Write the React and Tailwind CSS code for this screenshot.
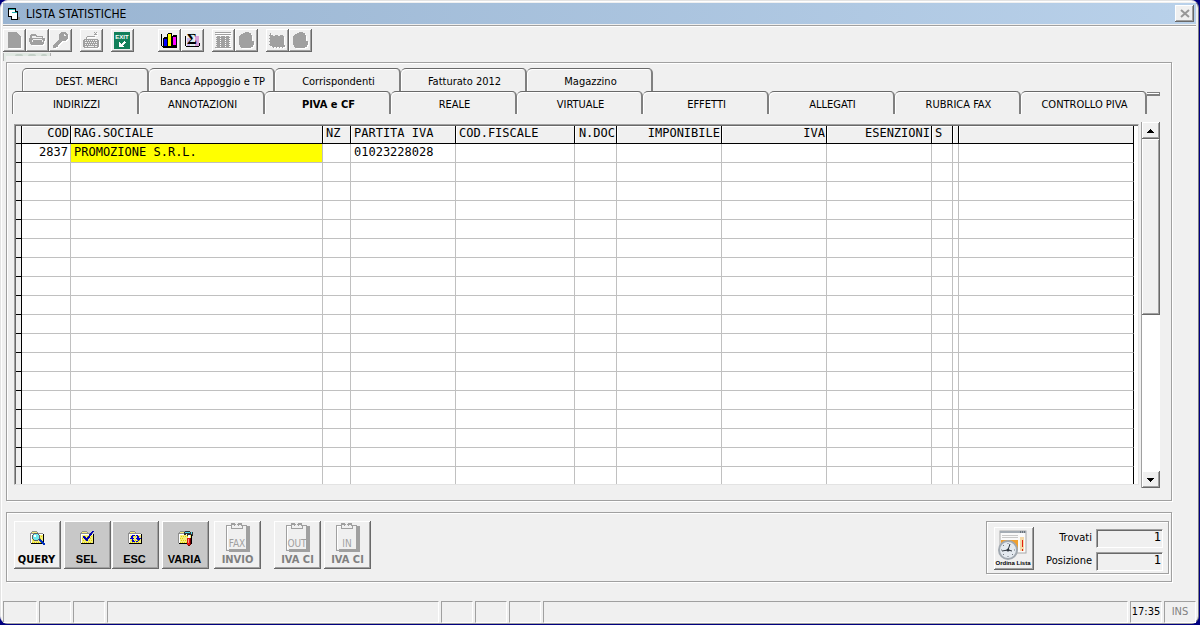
import { useState } from 'react';

const UPPER_TABS = ['DEST. MERCI', 'Banca Appoggio e TP', 'Corrispondenti', 'Fatturato 2012', 'Magazzino'];
const LOWER_TABS = [
  'INDIRIZZI', 'ANNOTAZIONI', 'PIVA e CF', 'REALE', 'VIRTUALE',
  'EFFETTI', 'ALLEGATI', 'RUBRICA FAX', 'CONTROLLO PIVA',
];

const COLUMNS = [
  { key: 'cod', label: 'COD', width: 'w-[49px]', right: true },
  { key: 'ragione', label: 'RAG.SOCIALE', width: 'w-[252px]' },
  { key: 'nz', label: 'NZ', width: 'w-[28px]' },
  { key: 'piva', label: 'PARTITA IVA', width: 'w-[105px]' },
  { key: 'cf', label: 'COD.FISCALE', width: 'w-[119px]' },
  { key: 'ndoc', label: 'N.DOC', width: 'w-[42px]', right: true },
  { key: 'imponibile', label: 'IMPONIBILE', width: 'w-[105px]', right: true },
  { key: 'iva', label: 'IVA', width: 'w-[105px]', right: true },
  { key: 'esenzioni', label: 'ESENZIONI', width: 'w-[105px]', right: true },
  { key: 's', label: 'S', width: 'w-[21px]' },
  { key: 'sep', label: '', width: 'w-[6px]' },
  { key: 'note', label: '', width: '' },
];

const ROWS = [{ cod: '2837', ragione: 'PROMOZIONE S.R.L.', piva: '01023228028' }];
const EMPTY_ROWS = 17;

const RAISED = 'shadow-[inset_-1px_-1px_#696969,inset_1px_1px_#ffffff,inset_-2px_-2px_#a0a0a0]';
const ETCHED = 'border border-[#a0a0a0] shadow-[inset_1px_1px_#ffffff,1px_1px_#ffffff]';

/* ---------- Toolbar icons ---------- */

function Glyph({ children, size = 18, disabled = false }) {
  return (
    <svg
      width={size}
      height={size}
      viewBox={`0 0 ${size} ${size}`}
      shapeRendering="crispEdges"
      aria-hidden="true"
      className={disabled ? 'drop-shadow-[1px_1px_0_#ffffff]' : ''}
    >
      {children}
    </svg>
  );
}

const PageIcon = () => (
  <Glyph disabled><path d="M3 1h9v1h1v1h1v1h1v1h1v12H3z" fill="#a0a0a0" /></Glyph>
);

const FolderIcon = () => (
  <Glyph disabled>
    <path d="M2 4h1V3h5v1h1v1h6v2h2v3h-1v3h-1v1H3v-1H2v-2H1V7h1z" fill="#a0a0a0" />
    <path d="M4 5h4v1h6v1H4zM5 8h9v1H5zM4 9h1v2H4zM14 9h1v2h-1z" fill="#f0f0f0" />
  </Glyph>
);

const KeyIcon = () => (
  <Glyph disabled>
    <path d="M10 1h5v1h1v1h1v5h-1v1h-1v1h-4v1h-1v1H9v1H8v1H7v2H5v1H2v-3h1v-1h1v-1h1v-1h1v-1h1V9h1V3h1V2h1z" fill="#a0a0a0" />
    <path d="M13 3h1v1h1v1h-2z" fill="#f0f0f0" />
  </Glyph>
);

const KeyboardIcon = () => (
  <Glyph disabled>
    <path d="M12 1h1v1h-1zM14 1h1v1h-1zM13 2h1v2h-1zM12 3h3v1h-3zM5 5h8v1H5zM4 6h1v2H4z" fill="#a0a0a0" />
    <path d="M2 8h14v1h1v7h-1v1H2v-1H1V9h1z" fill="#a0a0a0" />
    <path
      d="M3 9h1v1H3zM5 9h1v1H5zM7 9h1v1H7zM9 9h1v1H9zM11 9h1v1h-1zM13 9h2v1h-2zM3 11h2v1H3zM6 11h1v1H6zM8 11h1v1H8zM10 11h1v1h-1zM12 11h1v1h-1zM14 11h1v1h-1zM3 13h1v1H3zM5 13h1v1H5zM7 13h1v1H7zM9 13h1v1H9zM11 13h1v1h-1zM13 13h2v1h-2zM3 15h2v1H3zM6 15h6v1H6zM13 15h2v1h-2z"
      fill="#f0f0f0"
    />
  </Glyph>
);

const ExitIcon = () => (
  <Glyph>
    <rect x="1" y="1" width="16" height="17" fill="#12805a" />
    <text x="9" y="8" fontSize="6" fontWeight="700" fill="#ffffff" textAnchor="middle" fontFamily="Liberation Sans, sans-serif">EXIT</text>
    <path d="M11 10h1v1h1v1h-1v1h-1v1h-1v1h1v1H6v-5h1v1h1v1h1v-1h1v-1h1z" fill="#ffffff" />
  </Glyph>
);

const ChartIcon = () => (
  <Glyph>
    <path d="M1 3h1v12H1zM2 15h15v1H2zM3 16h14v1H3z" fill="#000000" />
    <path d="M3 7h1V6h4v9H3zM7 3h1V2h4v13H7zM12 5h1V4h4v10h-1v1h-4z" fill="#000000" />
    <path d="M4 8h3v7H4z" fill="#0000ff" />
    <path d="M8 3h3v12H8z" fill="#ffff00" />
    <path d="M13 6h3v8h-3z" fill="#ff00ff" />
    <path d="M16 13h1v2h-1z" fill="#000000" />
  </Glyph>
);

const SumIcon = () => (
  <Glyph>
    <path d="M2 5h1v10H2zM3 15h13v1H3z" fill="#000000" />
    <path d="M4 7h3v8H4z" fill="#c8b8f0" />
    <path d="M8 2h3v13H8z" fill="#d8ecf0" />
    <path d="M12 5h4v10h-4z" fill="#d8a0d8" />
    <path d="M16 12h1v3h-1z" fill="#000000" />
    <text x="9" y="13" fontSize="15" fontWeight="700" fill="#000000" textAnchor="middle" fontFamily="Liberation Serif, serif">Σ</text>
  </Glyph>
);

const GridIcon = () => (
  <Glyph disabled>
    <path d="M1 1h16v1H1zM1 3h16v1H1zM3 5h3v12H3zM7 5h4v12H7zM12 5h3v12h-3z" fill="#a0a0a0" />
    <path d="M2 6h14v1H2zM2 8h14v1H2zM2 10h14v1H2zM2 12h14v1H2zM2 14h14v1H2zM1 16h16v1H1z" fill="#a0a0a0" />
  </Glyph>
);

const HandIcon = () => (
  <Glyph disabled><path d="M4 3h2V2h2V1h4v1h2v2h1v6h2v4h-1v2h-2v1H4v-1H3v-2H2V5h1V4h1z" fill="#a0a0a0" /></Glyph>
);

const SeriesIcon = () => (
  <Glyph disabled>
    <path d="M2 2h1v2h2v1h2V4h3v1h2V4h3v1h1v9h1v2H4v-1H2z" fill="#a0a0a0" />
    <path d="M1 4h1v1H1zM1 7h1v1H1zM1 10h1v1H1zM1 13h1v1H1zM5 16h1v1H5zM8 16h1v1H8zM11 16h1v1h-1zM14 16h1v1h-1z" fill="#a0a0a0" />
  </Glyph>
);

const TOOLBAR = [
  [['Nuovo', PageIcon], ['Apri', FolderIcon], ['Chiave', KeyIcon]],
  [['Tastiera', KeyboardIcon]],
  [['Uscita', ExitIcon]],
  [['Grafico', ChartIcon], ['Totali', SumIcon]],
  [['Griglia', GridIcon], ['Copia', HandIcon]],
  [['Serie', SeriesIcon], ['Incolla', HandIcon]],
];
const GROUP_GAP = ['', 'ml-[8px]', 'ml-[8px]', 'ml-[24px]', 'ml-[8px]', 'ml-[8px]'];

/* ---------- Command icons ---------- */

function YellowFolder({ children }) {
  return (
    <Glyph size={16}>
      <path d="M1 3h1V2h1V1h5v1h1v1h5v11H2v-1H1z" fill="#909090" />
      <path d="M3 2h5v1H3zM2 4h12v9H2z" fill="#f4ec7c" />
      <path d="M2 4h12v1H2zM2 4h1v9H2z" fill="#ffffff" />
      <path d="M4 6h1v1H4zM6 6h1v1H6zM8 6h1v1H8zM10 6h1v1h-1zM12 6h1v1h-1zM3 8h1v1H3zM5 8h1v1H5zM11 8h1v1h-1zM4 10h1v1H4zM6 10h1v1H6zM8 10h1v1H8zM10 10h1v1h-1zM12 10h1v1h-1zM3 12h1v1H3zM5 12h1v1H5zM7 12h1v1H7zM9 12h1v1H9zM11 12h1v1h-1z" fill="#e0d800" />
      <path d="M14 4h1v10H2v-1h12z" fill="#000000" />
      {children}
    </Glyph>
  );
}

const QueryIcon = () => (
  <YellowFolder>
    <path d="M5 3h4v1h1v1h1v4h-1v1H9v1H5v-1H4V9H3V5h1V4h1z" fill="#606060" />
    <path d="M5 4h4v1h1v4H9v1H5V9H4V5h1z" fill="#70e8f0" />
    <path d="M5 5h2v2H5z" fill="#ffffff" />
    <path d="M10 9h2v1h1v1h1v1h1v1h1v2h-2v-1h-1v-1h-1v-1h-1v-1h-1z" fill="#0030c0" />
  </YellowFolder>
);

const CheckIcon = () => (
  <YellowFolder>
    <path d="M13 1h2v1h-1v1h-1v2h-1v1h-1v2h-1v1H9v2H7v-1H6V9H5V8H4V6h2v1h1v1h1V7h1V6h1V4h1V3h1V2h1z" fill="#0000b0" />
  </YellowFolder>
);

const CycleIcon = () => (
  <YellowFolder>
    <path d="M5 5h3v1H6v2h1v1H6v1H5V9H3V8h1V6h1zM5 10h2v1h1v1H5zM9 5h2v1h1v2h2v1h-1v1h-1v1h-1v-1h-1V9H9V8h1V6H9zM9 11h2v1H9z" fill="#0000d0" />
  </YellowFolder>
);

const HammerIcon = () => (
  <YellowFolder>
    <path d="M7 2h1V1h5v1h3v4h-1V5h-2v1h-3V4H9v1H7z" fill="#303030" />
    <path d="M8 2h5v1H8zM14 2h1v2h-1z" fill="#50d8e8" />
    <path d="M11 5h2v3h-2z" fill="#ffffff" />
    <path d="M10 8h3v7h-3z" fill="#e01010" />
    <path d="M11 9h1v4h-1z" fill="#ff9090" />
    <path d="M13 8h1v7h-1zM11 15h2v1h-2z" fill="#700000" />
  </YellowFolder>
);

function Clipboard({ text }) {
  return (
    <svg width="26" height="32" viewBox="0 0 26 32" shapeRendering="crispEdges" aria-hidden="true">
      <path d="M22 4h3v26H4v-3h18z" fill="#a0a0a0" />
      <path d="M1 3h6v1H2v24h19V4h-5V3h6v26H1z" fill="#a0a0a0" />
      <path d="M2 4h5v1H3v22H2z" fill="#ffffff" />
      <path d="M6 1h4v1h1v1h-1v1h-1V3H6zM13 1h4v2h-3v1h-1V3h-1V2h1zM6 4h1v2h10V4h1v3H6z" fill="#a0a0a0" />
      <text x="12" y="25" fontSize="10" fontWeight="400" fill="#a0a0a0" textAnchor="middle" fontFamily="DejaVu Sans Condensed, sans-serif">{text}</text>
    </svg>
  );
}

function SortIcon() {
  return (
    <svg width="30" height="30" viewBox="0 0 30 30" aria-hidden="true">
      <rect x="2" y="1" width="26" height="22" fill="#fafafa" stroke="#a8a8a8" />
      <rect x="2" y="1" width="26" height="2" fill="#a4acb4" />
      <path d="M22 2h1M24 2h1M26 2h1" stroke="#303840" />
      <rect x="4" y="5" width="16" height="1" fill="#c8c8c8" />
      <rect x="4" y="7" width="16" height="1" fill="#c8c8c8" />
      <rect x="3" y="10" width="17" height="10" fill="#f0a030" />
      <rect x="22" y="7" width="4" height="14" fill="#f6d9a8" />
      <path d="M24 10h1v7h-1zM24 19h1v2h-1z" fill="#e02010" />
      <circle cx="10" cy="20" r="9" fill="#e4eaf0" stroke="#a0a8b0" strokeWidth="2" />
      <path d="M10 13v1M10 26v1M3 20h1M16 20h1M5 15l1 1M15 25l-1-1M5 25l1-1" stroke="#707880" />
      <path d="M12 14l-2 6-6 1M10 20l4 1" fill="none" stroke="#303840" strokeWidth="1" />
      <circle cx="10" cy="20" r="1.5" fill="#303840" />
    </svg>
  );
}

/* ---------- Parts ---------- */

function TitleBar() {
  return (
    <header className="flex h-[21px] shrink-0 items-center bg-linear-to-r from-[#99b4d1] to-[#b9d1ea] pr-[2px] pl-[4px]">
      <svg width="14" height="14" viewBox="0 0 14 14" shapeRendering="crispEdges" aria-hidden="true">
        <path d="M1 1h8v3h2v9H4v-3H1z" fill="#000000" />
        <path d="M2 3h6v6H2zM5 6h5v6H5z" fill="#ffffff" />
        <path d="M2 2h6v1H2zM5 5h5v1H5z" fill="#20b0b0" />
        <path d="M11 10h2v3h-2z" fill="#909090" />
      </svg>
      <h1 className="ml-[5px] text-[12px] leading-[20px]">LISTA STATISTICHE</h1>
      <button type="button" aria-label="Chiudi" className={`ml-auto flex h-[17px] w-[19px] items-center justify-center bg-[#f0f0f0] ${RAISED}`}>
        <svg width="10" height="9" viewBox="0 0 10 9" aria-hidden="true">
          <path d="M1 1l8 7M9 1L1 8" stroke="#989898" strokeWidth="2" />
        </svg>
      </button>
    </header>
  );
}

function Toolbar() {
  return (
    <div className="mt-px flex shrink-0 border-t border-[#a0a0a0] pt-[3px] shadow-[inset_0_1px_#ffffff]">
      {TOOLBAR.map((group, i) => (
        <div key={i} className={`flex ${GROUP_GAP[i]}`}>
          {group.map(([name, Icon]) => (
            <button key={name} type="button" aria-label={name} className={`flex size-[23px] items-center justify-center pr-[2px] pb-[2px] ${RAISED}`}>
              <Icon />
            </button>
          ))}
        </div>
      ))}
    </div>
  );
}

function Tab({ label, active, onSelect }) {
  return (
    <button
      type="button"
      role="tab"
      aria-selected={active}
      onClick={() => onSelect(label)}
      className={`h-[23px] w-[126px] shrink-0 rounded-t-[5px] border-t border-r-2 border-[#808080] border-t-[#696969] pt-[3px] pl-[3px] text-[11px] leading-[19px] whitespace-nowrap shadow-[inset_1px_1px_#ffffff] first:w-[127px] first:border-l ${active ? 'font-bold' : ''}`}
    >
      {label}
    </button>
  );
}

function Grid() {
  const blank = Array.from({ length: EMPTY_ROWS }, () => ({}));
  return (
    <div className="mt-[2px] mb-[3px] min-h-0 min-w-0 flex-1 overflow-hidden border border-t-[#a0a0a0] border-r-[#e3e3e3] border-b-[#e3e3e3] border-l-[#a0a0a0] bg-white pr-[4px] pl-px shadow-[inset_1px_1px_#696969]">
      <table className="mt-px w-full table-fixed border-separate border-spacing-0 font-[DejaVu_Sans_Mono,monospace] text-[12px] leading-[16px]">
        <colgroup>
          <col className="w-[6px]" />
          {COLUMNS.map((c) => <col key={c.key} className={c.width} />)}
        </colgroup>
        <thead>
          <tr className="h-[18px] bg-[#f0f0f0]">
            <th className="border-r border-b border-black p-0" />
            {COLUMNS.map((c) => (
              <th
                key={c.key}
                scope="col"
                className={`h-[18px] overflow-hidden border-r border-b border-black p-0 pb-[2px] leading-[15px] font-normal whitespace-nowrap shadow-[inset_1px_1px_#ffffff] ${c.right ? 'pr-px text-right' : 'pl-[3px] text-left'}`}
              >
                {c.label}
              </th>
            ))}
          </tr>
        </thead>
        <tbody>
          {[...ROWS, ...blank].map((row, i) => (
            <tr key={i} className="h-[19px]">
              <td className="border-r border-b border-black bg-[#f0f0f0] p-0" />
              {COLUMNS.map((c) => (
                <td
                  key={c.key}
                  className={`h-[19px] border-r border-b border-[#c0c0c0] p-0 pb-[2px] whitespace-nowrap last:border-r-black ${c.right ? 'pr-[2px] text-right' : 'pl-[3px]'} ${c.key === 'ragione' && row.ragione ? 'bg-[#ffff00]' : ''}`}
                >
                  {row[c.key]}
                </td>
              ))}
            </tr>
          ))}
        </tbody>
      </table>
    </div>
  );
}

function ScrollBar() {
  return (
    <div className="ml-[2px] flex w-[19px] shrink-0 flex-col border-l border-[#a0a0a0] bg-white">
      <button type="button" aria-label="Su" className={`flex h-[17px] items-center justify-center bg-[#f0f0f0] pr-[2px] ${RAISED}`}>
        <svg width="7" height="4" viewBox="0 0 7 4" shapeRendering="crispEdges" aria-hidden="true"><path d="M3 0h1v1h1v1h1v1h1v1H0V3h1V2h1V1h1z" /></svg>
      </button>
      <div className={`h-[176px] bg-[#f0f0f0] ${RAISED}`} />
      <button type="button" aria-label="Giù" className={`mt-auto flex h-[17px] items-center justify-center bg-[#f0f0f0] pr-[2px] ${RAISED}`}>
        <svg width="7" height="4" viewBox="0 0 7 4" shapeRendering="crispEdges" aria-hidden="true"><path d="M0 0h7v1H6v1H5v1H4v1H3V3H2V2H1V1H0z" /></svg>
      </button>
    </div>
  );
}

function Command({ label, icon, tone = 'normal', className = '' }) {
  const tones = {
    normal: 'bg-[#f0f0f0] pt-[9px] pr-[2px] text-[11px]',
    dark: 'bg-[#c8c8c8] pt-[9px] pr-[2px] text-[11px] font-[Liberation_Sans,Arial,sans-serif]',
    disabled: 'bg-[#f0f0f0] pt-px text-[11px] text-[#808080]',
  };
  return (
    <button type="button" disabled={tone === 'disabled'} className={`flex h-[48px] w-[47px] shrink-0 flex-col items-center justify-between pb-[3px] leading-[13px] font-bold whitespace-nowrap ${RAISED} ${tones[tone]} ${className}`}>
      {icon}
      <span className={tone === 'disabled' ? '-mt-[3px]' : ''}>{label}</span>
    </button>
  );
}

function Counter({ id, label, value }) {
  return (
    <div className="flex items-center justify-end gap-[4px]">
      <label htmlFor={id} className="pb-[3px] text-[11px] leading-[15px]">{label}</label>
      <input
        id={id}
        readOnly
        value={value}
        className="h-[19px] w-[67px] border border-t-[#a0a0a0] border-r-white border-b-white border-l-[#a0a0a0] bg-[#f0f0f0] pr-px pb-[3px] text-right font-[DejaVu_Sans_Mono,monospace] text-[12px] shadow-[inset_1px_1px_#696969] outline-none"
      />
    </div>
  );
}

const STATUS_CELLS = ['w-[34px]', 'w-[32px]', 'w-[32px]', 'w-[332px]', 'w-[32px]', 'w-[32px]', 'w-[32px]', 'flex-1'];
const STATUS_BORDER = 'border border-t-[#a0a0a0] border-r-white border-b-white border-l-[#a0a0a0]';

function StatusBar() {
  return (
    <footer className="mt-[19px] flex h-[22px] shrink-0 gap-[2px] text-[11px] leading-[19px]">
      {STATUS_CELLS.map((w, i) => <div key={i} className={`${w} ${STATUS_BORDER}`} />)}
      <div className={`w-[32px] text-center ${STATUS_BORDER}`}>17:35</div>
      <div className={`w-[32px] text-center text-[#808080] ${STATUS_BORDER}`}>INS</div>
    </footer>
  );
}

export default function App() {
  const [tab, setTab] = useState('PIVA e CF');

  return (
    <div className="h-screen bg-[#000080] pr-px pb-px font-[DejaVu_Sans_Condensed,DejaVu_Sans,sans-serif] text-black">
      <div className="flex h-full flex-col rounded-[8px] border border-t-[#e3e3e3] border-r-[#808080] border-b-[#a0a0a0] border-l-[#e3e3e3] bg-[#f0f0f0] px-[2px] pt-[2px] shadow-[inset_1px_1px_#ffffff]">
        <TitleBar />
        <Toolbar />

        {/* Strip left under the toolbar */}
        <div className="flex h-[10px] shrink-0 pt-px">
          <div className="h-[8px] w-[3px] border-l border-[#b0b0b0] bg-[#e4ebe6]" />
          <div className="flex h-[3px] w-[45px] items-end gap-[5px] border-r border-[#b0b0b0] bg-[#e0e8e2] pl-[9px]">
            <span className="h-[2px] w-[8px] rounded-t-full bg-[#c4d0c8]" />
            <span className="h-[2px] w-[8px] rounded-t-full bg-[#c4d0c8]" />
            <span className="h-[2px] w-[6px] rounded-t-full bg-[#c4d0c8]" />
          </div>
        </div>

        <main className="flex min-h-0 flex-1 flex-col gap-[11px] pr-[24px] pl-[3px]">
          <section className={`flex min-h-0 flex-1 flex-col pt-[5px] pb-[12px] ${ETCHED}`}>
            <div role="tablist" className="ml-[15px] flex">
              {UPPER_TABS.map((t) => <Tab key={t} label={t} active={t === tab} onSelect={setTab} />)}
            </div>
            <div role="tablist" className="mr-[11px] ml-[5px] flex">
              {LOWER_TABS.map((t) => <Tab key={t} label={t} active={t === tab} onSelect={setTab} />)}
              <div className="mt-px h-[4px] flex-1 border-t border-r border-b-2 border-[#808080] bg-white" />
            </div>
            <div className="mt-[8px] mr-[11px] ml-[7px] flex min-h-0 flex-1">
              <Grid />
              <ScrollBar />
            </div>
          </section>

          <section className={`flex shrink-0 pt-[8px] pr-[2px] pb-[7px] pl-[7px] ${ETCHED}`}>
            <Command label="QUERY" icon={<QueryIcon />} />
            <Command label="SEL" icon={<CheckIcon />} tone="dark" className="ml-[3px]" />
            <Command label="ESC" icon={<CycleIcon />} tone="dark" className="ml-px" />
            <Command label="VARIA" icon={<HammerIcon />} tone="dark" className="ml-[3px]" />
            <Command label="INVIO" icon={<Clipboard text="FAX" />} tone="disabled" className="ml-[5px]" />
            <Command label="IVA CI" icon={<Clipboard text="OUT" />} tone="disabled" className="ml-[13px]" />
            <Command label="IVA CI" icon={<Clipboard text="IN" />} tone="disabled" className="ml-[3px]" />

            <div className={`ml-auto flex h-[53px] w-[183px] justify-between pt-[5px] pr-[5px] pl-[7px] ${ETCHED}`}>
              <button type="button" className={`flex h-[43px] w-[40px] flex-col items-center pt-[3px] pr-[2px] ${RAISED}`}>
                <SortIcon />
                <span className="font-[Liberation_Sans,Arial,sans-serif] text-[6px] leading-[7px] font-bold whitespace-nowrap">Ordina Lista</span>
              </button>
              <div className="flex flex-col gap-[4px] pt-[2px]">
                <Counter id="trovati" label="Trovati" value="1" />
                <Counter id="posizione" label="Posizione" value="1" />
              </div>
            </div>
          </section>
        </main>

        <StatusBar />
      </div>
    </div>
  );
}
